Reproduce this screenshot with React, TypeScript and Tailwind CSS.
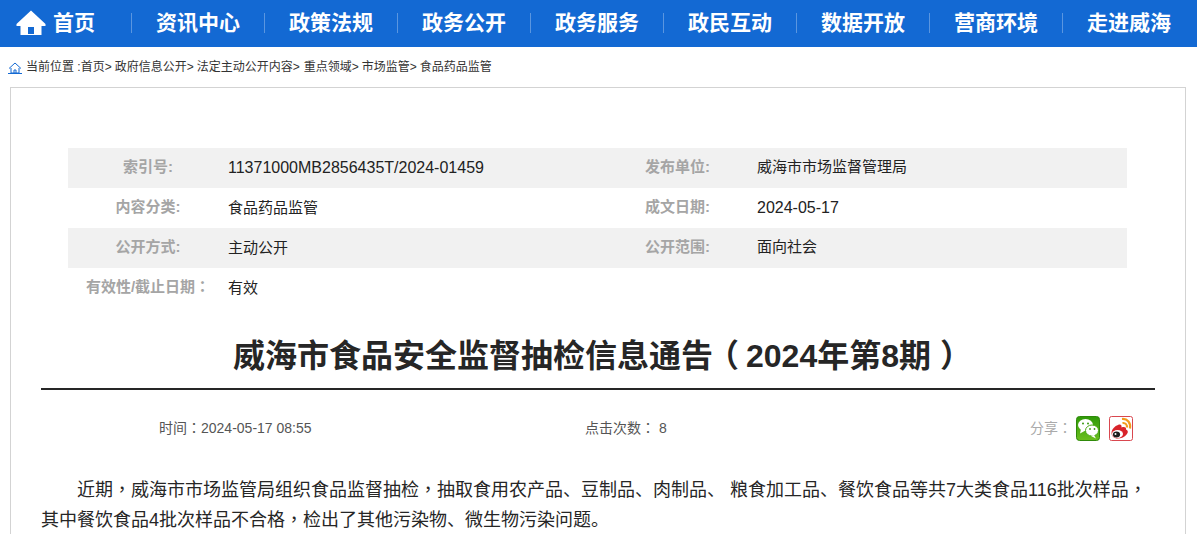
import { Fragment } from 'react';

const navItems = ['资讯中心', '政策法规', '政务公开', '政务服务', '政民互动', '数据开放', '营商环境', '走进威海'];

const rows = [
  ['索引号:', '11371000MB2856435T/2024-01459', '发布单位:', '威海市市场监督管理局'],
  ['内容分类:', '食品药品监管', '成文日期:', '2024-05-17'],
  ['公开方式:', '主动公开', '公开范围:', '面向社会'],
  ['有效性/截止日期：', '有效', '', ''],
];

// commas and colons sit in the middle of the cell in the original, the TC face draws them that way
function Zh({ text }: { text: string }) {
  return (
    <>
      {text.split(/([，：])/).map((part, i) =>
        i % 2 === 1 ? (
          <span key={i} className="leading-none font-['Noto_Sans_CJK_TC',sans-serif]">
            {part}
          </span>
        ) : (
          part
        ),
      )}
    </>
  );
}

function Value({ text }: { text: string }) {
  return <span className={`${/^\d/.test(text) ? 'text-base' : 'text-[15px]'} text-[#222]`}>{text}</span>;
}

function HomeIcon() {
  return (
    <svg viewBox="0 0 30 26" className="w-[30px] h-[26px] shrink-0 fill-white">
      <path
        fillRule="evenodd"
        d="M15 0.5 L29.5 14 V16 H25.5 V25 H4.5 V16 H0.5 V14 Z M12 17 V24 H18 V17 Z"
      />
    </svg>
  );
}

function WechatIcon() {
  return (
    <svg viewBox="0 0 24 25" className="w-6 h-[25px]">
      <defs>
        <linearGradient id="wx" x1="0" y1="0" x2="0" y2="1">
          <stop offset="0" stopColor="#2f9a08" />
          <stop offset="1" stopColor="#6cbf1e" />
        </linearGradient>
      </defs>
      <rect x="0.5" y="0.5" width="23" height="24" rx="3" fill="url(#wx)" stroke="#2f8a0a" />
      <ellipse cx="9.5" cy="9" rx="7.5" ry="6" fill="#fff" />
      <path d="M5 13 L4 17.5 L9.5 14.5 Z" fill="#fff" />
      <ellipse cx="16" cy="14.5" rx="6.5" ry="5.5" stroke="#4aa812" fill="#fff" />
      <path d="M18 19 L20 22.5 L14.5 19.8 Z" fill="#fff" />
      <circle cx="7" cy="7.5" r="1" fill="#3b9a10" />
      <circle cx="12" cy="7.5" r="1" fill="#3b9a10" />
      <circle cx="14" cy="13" r="0.9" fill="#3b9a10" />
      <circle cx="18.5" cy="13" r="0.9" fill="#3b9a10" />
    </svg>
  );
}

function WeiboIcon() {
  return (
    <svg viewBox="0 0 24 25" className="w-6 h-[25px]">
      <rect x="0.5" y="0.5" width="23" height="24" rx="2" fill="#fff" stroke="#d9474f" />
      <path
        d="M2.5 17 C2.5 13 6 10 9 9 C11.5 8 13 9 12.5 11.5 C15 10.5 17.5 11 17 13.5 C19 14.5 19.5 16 18 18 C16 21 12 22.5 8.5 22.5 C5 22.5 2.5 20 2.5 17 Z"
        fill="#d8232a"
      />
      <ellipse cx="8.5" cy="18" rx="5.5" ry="4" fill="#fff" />
      <ellipse cx="7.5" cy="18.5" rx="3.6" ry="3" fill="#1d1d1d" />
      <circle cx="6.5" cy="18" r="1" fill="#fff" />
      <path d="M13 3 C18.5 2.5 22 7 21 12.5" fill="none" stroke="#f39a1e" strokeWidth="2.2" />
      <path d="M13.5 7 C16.5 6.5 18.5 9 17.8 11.5" fill="none" stroke="#f39a1e" strokeWidth="2" />
    </svg>
  );
}

export default function App() {
  return (
    <div className="h-screen overflow-hidden bg-white font-['Liberation_Sans','Noto_Sans_CJK_SC',sans-serif]">
      <nav className="h-[47px] pb-[2px] bg-[#1369d3] flex items-center text-white text-[21px] font-bold">
        <a className="w-[131px] shrink-0 flex items-center gap-[7px] pl-[16px]">
          <HomeIcon />
          首页
        </a>
        {navItems.map((item) => (
          <Fragment key={item}>
            <span className="w-px h-5 bg-white/30 shrink-0" />
            <a className="w-[132px] shrink-0 text-center">{item}</a>
          </Fragment>
        ))}
      </nav>

      <div className="h-10 flex items-center pl-2 text-xs text-[#333]">
        <svg viewBox="0 0 14 12" className="w-[14px] h-3 mr-[4px] mt-[2px] fill-none stroke-[#1369d3]">
          <path d="M1 6.5 L7 1 L13 6.5 M3 6 V11 H11 V6 M6 11 V8 H8 V11 M0 11.5 H14" />
        </svg>
        <span>当前位置 :</span>
        <span>首页&gt;</span>
        <span className="ml-[3px]">政府信息公开&gt;</span>
        <span className="ml-[3px]">法定主动公开内容&gt;</span>
        <span className="ml-1">重点领域&gt;</span>
        <span className="ml-[3px]">市场监管&gt;</span>
        <span className="ml-[3px]">食品药品监管</span>
      </div>

      <main className="mx-[10px] w-[1176px] border border-[#d3d3d3] pt-[60px] pb-10 px-[30px]">
        <div className="mx-[27px] w-[1059px]">
          {rows.map((row, i) => (
            <div key={row[0]} className={`h-10 pb-px flex items-center ${i % 2 === 0 ? 'bg-[#f1f1f1]' : ''}`}>
              <span className="w-40 text-center text-[15px] font-bold text-[#a5a5a5]">
                <Zh text={row[0]} />
              </span>
              <span className="w-[370px]">
                <Value text={row[1]} />
              </span>
              <span className="w-[159px] text-center text-[15px] font-bold text-[#a5a5a5]">{row[2]}</span>
              <Value text={row[3]} />
            </div>
          ))}
        </div>

        <h1 className="mt-[26px] h-14 w-[1114px] border-b-2 border-[#262626] text-center text-[32px] leading-[45px] font-bold text-[#262626]">
          威海市食品安全监督抽检信息通告
          <span className="ml-[10px] mr-[7px] [font-feature-settings:'halt']">（</span>
          2024年第8期
          <span className="ml-[9px] mr-[7px] [font-feature-settings:'halt']">）</span>
        </h1>

        <div className="h-[78px] pb-[2px] flex items-center text-sm text-[#555]">
          <span className="ml-[118px] w-[426px]">
            时间<Zh text="：" />2024-05-17 08:55
          </span>
          <span className="w-[445px]">
            点击次数<Zh text="：" /> 8
          </span>
          <span className="text-[#aaa]">
            分享<Zh text="：" />
          </span>
          <span className="ml-1 flex gap-[9px]">
            <WechatIcon />
            <WeiboIcon />
          </span>
        </div>

        <p className="pt-[7px] indent-9 text-lg leading-[30px] text-[#262626]">
          <Zh text="近期，威海市市场监管局组织食品监督抽检，抽取食用农产品、豆制品、肉制品、 粮食加工品、餐饮食品等共7大类食品116批次样品，其中餐饮食品4批次样品不合格，检出了其他污染物、微生物污染问题。" />
        </p>
      </main>
    </div>
  );
}
